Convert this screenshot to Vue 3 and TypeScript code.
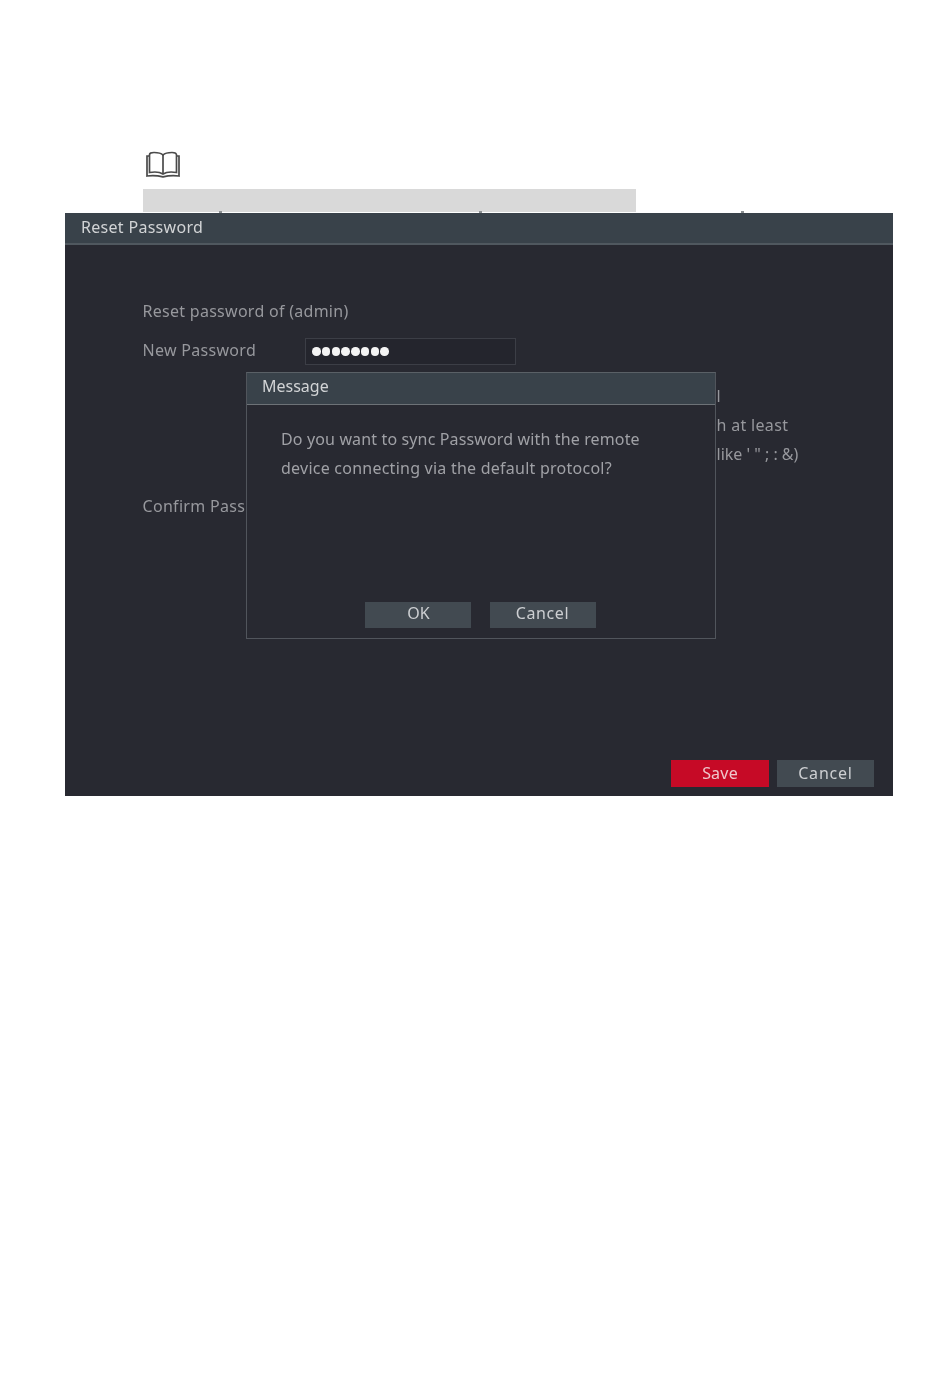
<script setup lang="ts">
const dots: number[] = [1, 2, 3, 4, 5, 6, 7, 8];
</script>

<template>
  <main class="page">
    <svg class="book" width="36" height="28" viewBox="0 0 36 28" fill="none" stroke="#4a4a4a" stroke-width="1.7">
      <path d="M4.500 21.500V4C4.500 2 6 1.500 9 1.500c4 0 7 .5 9 2.500 2-2 5-2.500 9-2.500 3 0 4.500 .5 4.500 2.500v17.500c-4-.7-10-.7-13.500 1.500-3.500-2.200-9.500-2.200-13.500-1.500z" />
      <path d="M18 4v19" />
      <path d="M4.500 5H2v20c5.500-.8 10.500-.5 16 .8 5.500-1.300 10.500-1.600 16-.8V5h-2.500" />
    </svg>
    <div class="note-bar"></div>
    <section class="panel">
      <i class="tick tick-a"></i>
      <i class="tick tick-b"></i>
      <i class="tick tick-c"></i>
      <header class="panel-head">Reset Password</header>
      <div class="panel-body">
        <p class="reset-of">Reset password of (admin)</p>
        <div class="row">
          <label class="label">New Password</label>
          <div class="input">
            <span v-for="d in dots" :key="d" class="dot"></span>
          </div>
        </div>
        <div class="hint">
          <span class="hint-line">l</span>
          <span class="hint-line two">h at least</span>
          <span class="hint-line">like ' " ; : &amp;)</span>
        </div>
        <div class="row confirm">
          <label class="label">Confirm Pass</label>
        </div>
      </div>
      <footer class="panel-foot">
        <button class="btn save">Save</button>
        <button class="btn cancel-main">Cancel</button>
      </footer>

      <div class="dialog">
        <header class="dialog-head">Message</header>
        <div class="dialog-body">
          <p><span class="l1">Do you want to sync Password with the remote</span><br /><span class="l2">device connecting via the default protocol?</span></p>
        </div>
        <footer class="dialog-foot">
          <button class="btn small ok-small">OK</button>
          <button class="btn small cancel-small">Cancel</button>
        </footer>
      </div>
    </section>
  </main>
</template>

<style>
html, body { margin: 0; background: #fff; }
</style>

<style scoped>
.page {
  height: 1396px;
  box-sizing: border-box;
  padding: 151px 57px 0 65px;
  font-family: "Noto Sans", "Open Sans", sans-serif;
  background: #fff;
  overflow: hidden;
}
.book { display: block; margin-left: 80px; }
.note-bar { width: 493px; height: 23px; margin: 10px 0 0 78px; background: #d9d9d9; }
.panel {
  position: relative;
  height: 583px;
  margin-top: 1px;
  display: flex;
  flex-direction: column;
  background: #282931;
  color: #97989d;
  font-size: 16px;
  filter: blur(0.35px);
}
.tick { position: absolute; top: -2px; width: 3px; height: 2px; background: #8b8f92; }
.tick-a { left: 154px; }
.tick-b { left: 414px; }
.tick-c { left: 676px; }
.panel-head {
  height: 30px;
  line-height: 29px;
  padding-left: 16px;
  background: #39424a;
  border-bottom: 2px solid #50585f;
  color: #d2d4d6;
  letter-spacing: 0.3px;
}
.panel-body { flex: 1; padding: 54px 0 0 77.500px; }
.reset-of { margin: 0; height: 24px; line-height: 24px; letter-spacing: 0.28px; }
.row { display: flex; align-items: center; }
.row:first-of-type { margin-top: 15px; }
.label { width: 162.500px; height: 27px; line-height: 25px; white-space: nowrap; letter-spacing: 0.3px; }
.input {
  box-sizing: border-box;
  width: 211px;
  height: 27px;
  display: flex;
  align-items: center;
  gap: 1.250px;
  padding-left: 6px;
  background: #24252d;
  border: 1px solid #3c3e46;
}
.dot { width: 8.500px; height: 8.500px; border-radius: 50%; background: #f4f4f4; }
.hint {
  margin: 17px 0 0 574px;
  height: 112px;
  display: flex;
  flex-direction: column;
  align-items: flex-start;
  line-height: 29px;
}
.hint-line { white-space: nowrap; }
.hint-line.two { letter-spacing: 0.32px; }
.panel-foot {
  display: flex;
  justify-content: flex-end;
  gap: 8px;
  padding: 0 19px 9px 0;
}
.btn {
  box-sizing: border-box;
  width: 97px;
  height: 27px;
  padding: 0 0 2px;
  border: 0;
  background: #424a51;
  color: #cdcfd2;
  font: inherit;
  letter-spacing: 0.8px;
}
.save { width: 98px; background: #c60a26; color: #efc6cb; letter-spacing: 0.2px; }
.dialog {
  position: absolute;
  left: 181px;
  top: 158.500px;
  box-sizing: border-box;
  width: 470px;
  height: 267.500px;
  display: flex;
  flex-direction: column;
  background: #282931;
  border: 1px solid #51555c;
  border-top-color: #5a6066;
}
.dialog-head {
  height: 31.500px;
  line-height: 26px;
  padding-left: 15px;
  background: #39424a;
  border-bottom: 1px solid #6d7277;
  color: #d2d4d6;
}
.dialog-body { flex: 1; padding: 20px 0 0 34px; }
.dialog-body p { margin: 0; line-height: 29px; color: #a0a1a6; white-space: nowrap; }
.l1 { letter-spacing: 0.14px; }
.l2 { letter-spacing: 0.24px; }
.dialog-foot {
  display: flex;
  justify-content: center;
  gap: 19px;
  padding: 0 2px 10px 0;
}
.btn.small { width: 106px; height: 26px; padding-bottom: 4px; letter-spacing: 0; }
.btn.ok-small { padding-left: 2px; }
.btn.cancel-small { letter-spacing: 0.6px; }
</style>
